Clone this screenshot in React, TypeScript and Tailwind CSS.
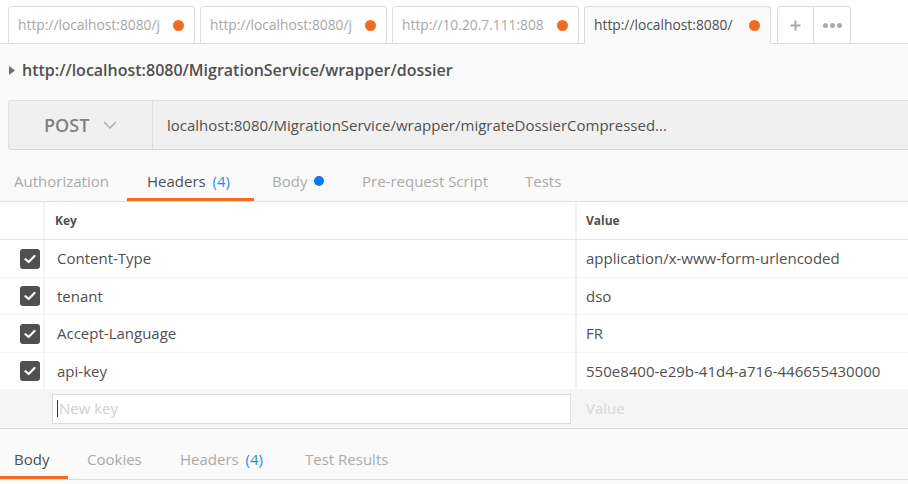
import React from 'react';

const font = { fontFamily: '"Open Sans", "Liberation Sans", sans-serif' };

const tabs = [
  { label: 'http://localhost:8080/j', active: false },
  { label: 'http://localhost:8080/j', active: false },
  { label: 'http://10.20.7.111:808', active: false },
  { label: 'http://localhost:8080/', active: true },
];

const headers = [
  { key: 'Content-Type', value: 'application/x-www-form-urlencoded', h: 'h-[37px]' },
  { key: 'tenant', value: 'dso', h: 'h-[36px]' },
  { key: 'Accept-Language', value: 'FR', h: 'h-[37px]' },
  { key: 'api-key', value: '550e8400-e29b-41d4-a716-446655430000', h: 'h-[36px]' },
];

const Check = () => (
  <div className="w-5 h-5 rounded-[3px] bg-[#505050] flex items-center justify-center">
    <svg width="12" height="10" viewBox="0 0 12 10" fill="none">
      <path d="M1.5 5.2 L4.6 8 L10.5 2" stroke="white" strokeWidth="2.2" strokeLinecap="round" strokeLinejoin="round" />
    </svg>
  </div>
);

const TabBar = () => (
  <div className="h-[44px] bg-white border-b border-[#dcdcdc] flex items-end pl-2 gap-[5px]">
    {tabs.map((t, i) => (
      <div
        key={i}
        className={`w-[187px] h-[38px] -mb-px flex items-center pl-[9px] pr-[10px] border border-[#dcdcdc] rounded-t-[3px] ${t.active ? 'bg-[#fafafa] border-b-[#fafafa]' : 'bg-white'}`}
      >
        <span className={`w-[145px] overflow-hidden whitespace-nowrap text-[13.8px] ${t.active ? 'text-[#505050]' : 'text-[#a8a8a8]'}`}>{t.label}</span>
        <span className="ml-auto w-[11px] h-[11px] rounded-full bg-[#f26b21]" />
      </div>
    ))}
    <div className="h-[38px] -mb-px ml-px flex border border-[#dcdcdc] rounded-t-[3px] bg-white">
      <div className="w-[36px] flex items-center justify-center border-r border-[#dcdcdc]">
        <svg width="11" height="11" viewBox="0 0 11 11"><path d="M5.5 0.5 V10.5 M0.5 5.5 H10.5" stroke="#aaa" strokeWidth="2" /></svg>
      </div>
      <div className="w-[36px] flex items-center justify-center gap-[2px]">
        <span className="w-[5px] h-[5px] rounded-full bg-[#aaa]" />
        <span className="w-[5px] h-[5px] rounded-full bg-[#aaa]" />
        <span className="w-[5px] h-[5px] rounded-full bg-[#aaa]" />
      </div>
    </div>
  </div>
);

export default function App() {
  return (
    <div className="w-[908px] h-[484px] bg-[#fafafa] overflow-hidden" style={font}>
      <TabBar />

      <div className="h-[56px] flex items-center pl-[9px] pb-[4px] gap-[7px]">
        <svg width="6" height="9" viewBox="0 0 6 9"><path d="M0 0 L6 4.5 L0 9 Z" fill="#707070" /></svg>
        <span className="text-[16px] font-semibold text-[#505050]">http://localhost:8080/MigrationService/wrapper/dossier</span>
      </div>

      <div className="ml-2 h-[50px] flex bg-[#f0f0f0] border border-[#e0e0e0] border-b-[#d6d6d6] border-r-0 rounded-l-[3px]">
        <div className="w-[144px] flex items-center pl-[35px] gap-[14px] border-r border-[#dcdcdc]">
          <span className="text-[18px] font-semibold text-[#808080]">POST</span>
          <svg width="14" height="8" viewBox="0 0 14 8" fill="none"><path d="M1 1 L7 7 L13 1" stroke="#b0b0b0" strokeWidth="1.5" /></svg>
        </div>
        <div className="flex items-center pl-[14px] text-[15px] text-[#505050]">localhost:8080/MigrationService/wrapper/migrateDossierCompressed...</div>
      </div>

      <div className="h-[52px] flex items-end border-b border-[#dcdcdc] text-[15px] text-[#aaa]">
        <div className="w-[127px] pl-[14px] pb-[6px] border-b-[3px] border-transparent">Authorization</div>
        <div className="w-[127px] pl-[20px] pb-[6px] border-b-[3px] border-[#f26b21] text-[#505050] whitespace-nowrap">Headers <span className="text-[#2f8fe6] ml-[3px]">(4)</span></div>
        <div className="w-[108px] pl-[18px] pb-[6px] border-b-[3px] border-transparent flex items-center">Body<span className="ml-[7px] w-[10px] h-[10px] rounded-full bg-[#097bed]" /></div>
        <div className="w-[163px] pb-[6px] border-b-[3px] border-transparent">Pre-request Script</div>
        <div className="pb-[6px] border-b-[3px] border-transparent">Tests</div>
      </div>

      <div className="flex flex-col bg-[#f3f3f3]">
        <div className="h-[37px] flex gap-[2px] text-[12px] font-bold text-[#505050]">
          <div className="w-[43px] bg-white" />
          <div className="w-[530px] bg-white flex items-center pl-[10px]">Key</div>
          <div className="flex-1 bg-white flex items-center pl-[9px]">Value</div>
        </div>
        <div className="h-px bg-[#e2e2e2]" />
        <div className="flex flex-col gap-px">
          {headers.map((h) => (
            <div key={h.key} className={`${h.h} flex gap-[2px] text-[15px] text-[#505050]`}>
              <div className="w-[43px] bg-white flex items-center justify-end pr-[3px]"><Check /></div>
              <div className="w-[530px] bg-white flex items-center pl-[12px]">{h.key}</div>
              <div className="flex-1 bg-white flex items-center pl-[9px]">{h.value}</div>
            </div>
          ))}
        </div>
      </div>

      <div className="h-[40px] flex items-center bg-[#f5f5f5] border-b border-[#dcdcdc]">
        <div className="ml-[52px] w-[519px] h-[30px] bg-white border border-[#dcdcdc] flex items-center pl-[4px] text-[15px] text-[#d0d0d0]">
          <span className="w-px h-[17px] bg-[#333] mr-[1px]" />New key
        </div>
        <div className="pl-[15px] text-[15px] text-[#d8d8d8]">Value</div>
      </div>

      <div className="h-[51px] flex items-end border-b border-[#dcdcdc] text-[15px] text-[#aaa]">
        <div className="w-[68px] pl-[14px] pb-[6px] border-b-[3px] border-[#f26b21] text-[#505050]">Body</div>
        <div className="w-[112px] pl-[19px] pb-[6px] border-b-[3px] border-transparent">Cookies</div>
        <div className="w-[125px] pb-[6px] border-b-[3px] border-transparent whitespace-nowrap">Headers <span className="text-[#2f8fe6] ml-[3px]">(4)</span></div>
        <div className="pb-[6px] border-b-[3px] border-transparent">Test Results</div>
      </div>
    </div>
  );
}
